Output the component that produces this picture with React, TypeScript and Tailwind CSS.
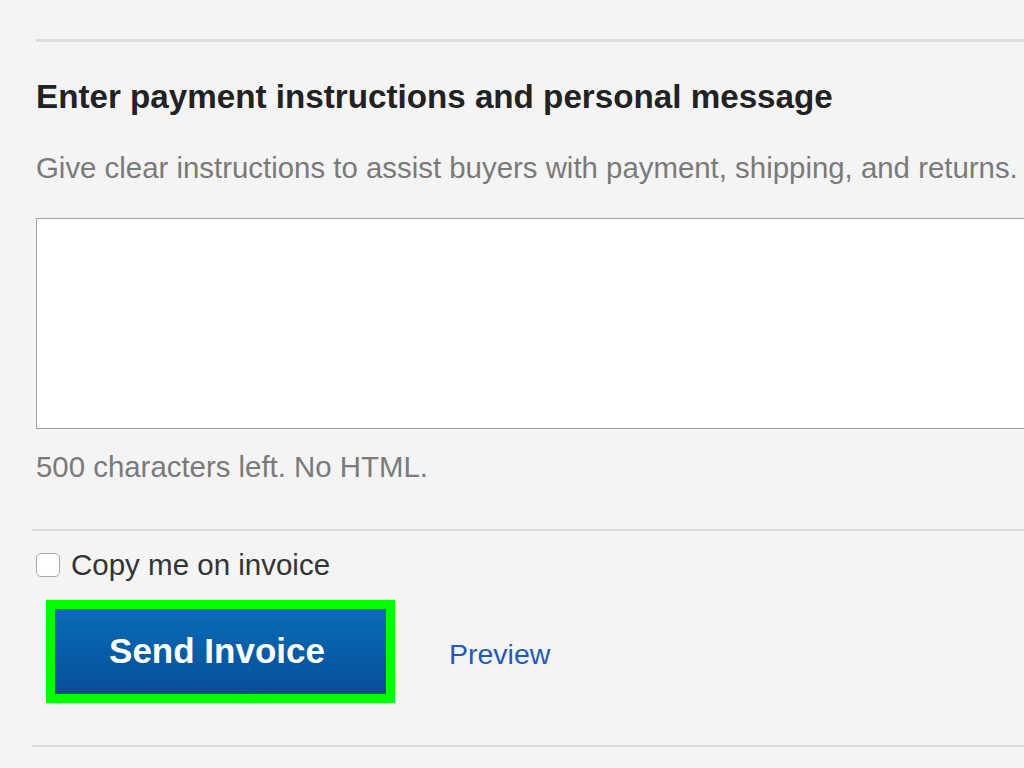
export default function App() {
  return (
    <div
      className="min-h-[768px] w-[1024px] overflow-hidden bg-[#f4f4f4] pl-9 text-[#333]"
      style={{ fontFamily: '"Liberation Sans", Arial, sans-serif' }}
    >
      <div className="pt-[39px]">
        <div className="h-[3px] bg-[#dcdcdc]" />
      </div>

      <h2 className="mt-[35px] whitespace-nowrap text-[33.2px] leading-[40px] font-bold text-[#222]">
        Enter payment instructions and personal message
      </h2>

      <p className="mt-[34px] whitespace-nowrap text-[29.4px] leading-[34px] text-[#7a7a7a]">
        Give clear instructions to assist buyers with payment, shipping, and returns.
      </p>

      <textarea className="mt-[33px] block h-[211px] w-[1000px] resize-none border border-[#a0a0a0] bg-white outline-none" />

      <p className="mt-[21px] text-[29.4px] leading-[34px] text-[#7a7a7a]">
        500 characters left. No HTML.
      </p>

      <div className="mt-[45px] -ml-1 h-[2px] bg-[#dcdcdc]" />

      <label className="mt-[16px] flex h-[36px] items-center gap-[11px]">
        <span className="h-[24px] w-[24px] rounded-[5px] border border-[#a8a8a8] bg-white" />
        <span className="text-[29.5px] leading-[36px] text-[#333]">Copy me on invoice</span>
      </label>

      <div className="mt-[17px] flex items-center">
        <div className="ml-[10px] border-[9px] border-[#00ff00]">
          <button className="flex h-[85px] w-[331px] items-center justify-center bg-gradient-to-b from-[#0a6db8] to-[#064d99] pr-[7px] text-[35px] font-bold text-white">
            Send Invoice
          </button>
        </div>
        <a className="ml-[54px] mt-[5px] text-[28.5px] text-[#1f5cb8]">Preview</a>
      </div>

      <div className="mt-[42px] -ml-1 h-[2px] bg-[#dcdcdc]" />
    </div>
  );
}
